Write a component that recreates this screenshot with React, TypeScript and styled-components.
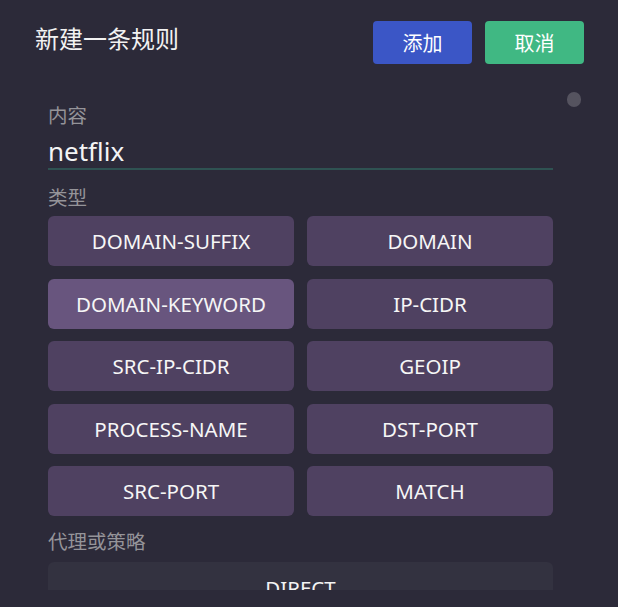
import React from "react";
import styled, { createGlobalStyle } from "styled-components";

const Global = createGlobalStyle`
  html, body { margin: 0; padding: 0; background: #2c2a39; }
  body { font-family: "Noto Sans", "Noto Sans CJK SC", sans-serif; }
  * { box-sizing: border-box; }
`;

const Dialog = styled.div`
  width: 618px;
  height: 607px;
  background: #2c2a39;
  padding: 21px 34px 0 35px;
  display: flex;
  flex-direction: column;
  overflow: hidden;
`;

const Header = styled.div`
  display: flex;
  align-items: flex-start;
  justify-content: space-between;
  height: 43px;
`;

const Title = styled.h1`
  margin: 0;
  padding-top: 2px;
  font-size: 24px;
  line-height: 30px;
  font-weight: 400;
  color: #f2f2f2;
  font-family: "Noto Sans CJK SC", sans-serif;
`;

const Actions = styled.div`
  display: flex;
  gap: 13px;
`;

const ActionButton = styled.button<{ $tone: "blue" | "green" }>`
  width: 99px;
  height: 43px;
  border: none;
  border-radius: 4px;
  background: ${(p) => (p.$tone === "blue" ? "#3b56c6" : "#40b883")};
  color: #fff;
  font-family: "Noto Sans CJK SC", sans-serif;
  font-size: 20px;
  cursor: pointer;
`;

const Body = styled.div`
  position: relative;
  margin-top: 21px;
  height: 505px;
  overflow: hidden;
`;

const ScrollThumb = styled.div`
  position: absolute;
  right: 3px;
  top: 7px;
  width: 14px;
  height: 15px;
  border-radius: 7px;
  background: #55535f;
`;

const Content = styled.div`
  margin-left: 13px;
  width: 505px;
  padding-top: 18px;
  display: flex;
  flex-direction: column;
`;

const Label = styled.div<{ $gap: number }>`
  font-family: "Noto Sans CJK SC", sans-serif;
  font-size: 19.5px;
  line-height: 24px;
  color: #959499;
  margin-bottom: ${(p) => p.$gap}px;
`;

const Input = styled.input`
  width: 100%;
  height: 33px;
  padding: 0 0 3px 0;
  background: transparent;
  border: none;
  border-bottom: 2px solid #2f5252;
  color: #f4f4f4;
  font-family: "Noto Sans", sans-serif;
  font-size: 26px;
  line-height: 30px;
  outline: none;
  margin-bottom: 15px;
`;

const Grid = styled.div`
  display: grid;
  grid-template-columns: 1fr 1fr;
  column-gap: 13px;
  row-gap: 12.5px;
  margin-bottom: 13px;
`;

const TypeButton = styled.button<{ $active?: boolean }>`
  height: 50px;
  border: none;
  border-radius: 6px;
  background: ${(p) => (p.$active ? "#68557e" : "#4f4161")};
  color: #f6f6f6;
  font-family: "Noto Sans", sans-serif;
  font-size: 20.5px;
  cursor: pointer;
`;

const SelectBox = styled.div`
  height: 50px;
  border-radius: 6px;
  background: #333240;
  color: #f4f4f4;
  display: flex;
  align-items: center;
  justify-content: center;
  font-family: "Noto Sans", sans-serif;
  font-size: 20.5px;
  padding-top: 2px;
`;

const types = [
  "DOMAIN-SUFFIX",
  "DOMAIN",
  "DOMAIN-KEYWORD",
  "IP-CIDR",
  "SRC-IP-CIDR",
  "GEOIP",
  "PROCESS-NAME",
  "DST-PORT",
  "SRC-PORT",
  "MATCH",
];

export default function App() {
  return (
    <>
      <Global />
      <Dialog>
        <Header>
          <Title>新建一条规则</Title>
          <Actions>
            <ActionButton $tone="blue">添加</ActionButton>
            <ActionButton $tone="green">取消</ActionButton>
          </Actions>
        </Header>
        <Body>
          <ScrollThumb />
          <Content>
            <Label $gap={10}>内容</Label>
            <Input defaultValue="netflix" />
            <Label $gap={7}>类型</Label>
            <Grid>
              {types.map((t) => (
                <TypeButton key={t} $active={t === "DOMAIN-KEYWORD"}>
                  {t}
                </TypeButton>
              ))}
            </Grid>
            <Label $gap={9}>代理或策略</Label>
            <SelectBox>DIRECT</SelectBox>
          </Content>
        </Body>
      </Dialog>
    </>
  );
}
